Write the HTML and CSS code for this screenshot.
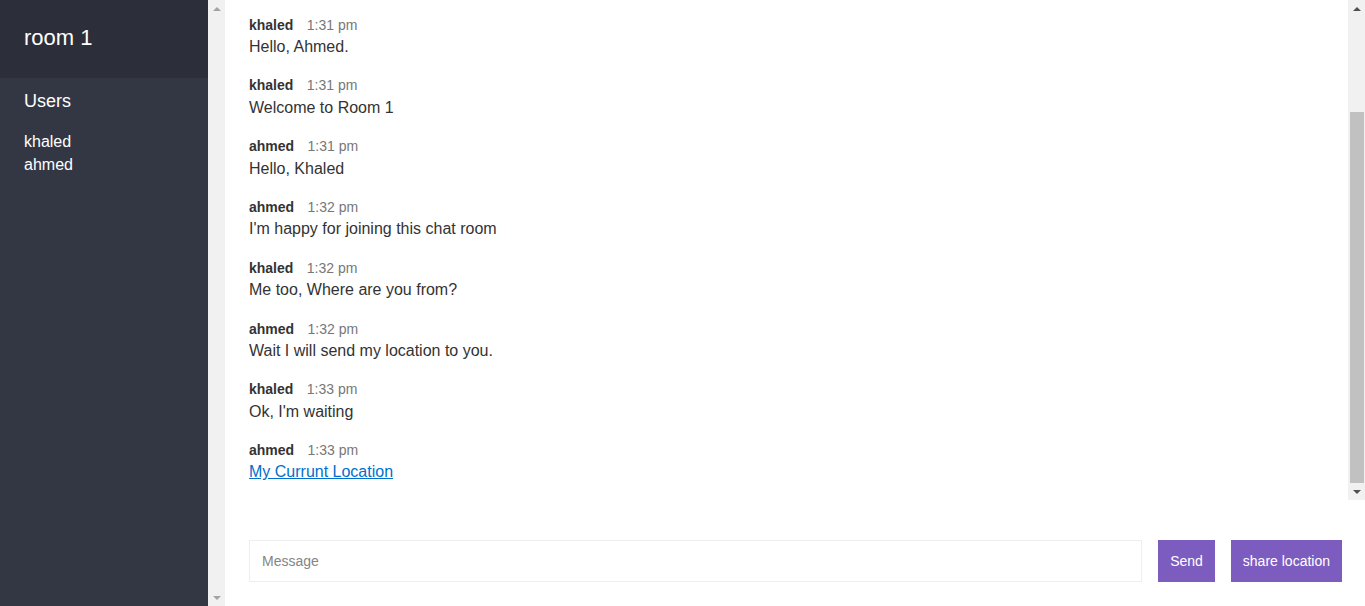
FILE: index.html
```html
<!DOCTYPE html>
<html lang="en">
<head>
<meta charset="utf-8">
<title>Chat App</title>
<link rel="stylesheet" href="styles.css">
</head>
<body>
<div class="chat">
  <div class="chat__sidebar">
    <div class="sidebar__content">
      <h2 class="room-title">room 1</h2>
      <h3 class="list-title">Users</h3>
      <ul class="users">
        <li>khaled</li>
        <li>ahmed</li>
      </ul>
    </div>
    <div class="scrollbar">
      <div class="scrollbar__btn"><span class="arrow arrow--up arrow--off"></span></div>
      <div class="scrollbar__track"></div>
      <div class="scrollbar__btn"><span class="arrow arrow--down arrow--off"></span></div>
    </div>
  </div>
  <div class="chat__main">
    <div class="chat__scroller">
      <div id="messages" class="chat__messages">
        <div class="message">
          <p><span class="message__name">khaled</span> <span class="message__meta">1:31 pm</span></p>
          <p>Hello, Ahmed.</p>
        </div>
        <div class="message">
          <p><span class="message__name">khaled</span> <span class="message__meta">1:31 pm</span></p>
          <p>Welcome to Room 1</p>
        </div>
        <div class="message">
          <p><span class="message__name">ahmed</span> <span class="message__meta">1:31 pm</span></p>
          <p>Hello, Khaled</p>
        </div>
        <div class="message">
          <p><span class="message__name">ahmed</span> <span class="message__meta">1:32 pm</span></p>
          <p>I'm happy for joining this chat room</p>
        </div>
        <div class="message">
          <p><span class="message__name">khaled</span> <span class="message__meta">1:32 pm</span></p>
          <p>Me too, Where are you from?</p>
        </div>
        <div class="message">
          <p><span class="message__name">ahmed</span> <span class="message__meta">1:32 pm</span></p>
          <p>Wait I will send my location to you.</p>
        </div>
        <div class="message">
          <p><span class="message__name">khaled</span> <span class="message__meta">1:33 pm</span></p>
          <p>Ok, I'm waiting</p>
        </div>
        <div class="message">
          <p><span class="message__name">ahmed</span> <span class="message__meta">1:33 pm</span></p>
          <p><a href="#">My Currunt Location</a></p>
        </div>
      </div>
      <div class="scrollbar">
        <div class="scrollbar__btn"><span class="arrow arrow--up"></span></div>
        <div class="scrollbar__track scrollbar__track--end"><div class="scrollbar__thumb"></div></div>
        <div class="scrollbar__btn"><span class="arrow arrow--down"></span></div>
      </div>
    </div>
    <div class="compose">
      <form id="message-form">
        <input id="message-input" name="message" placeholder="Message" required autocomplete="off" autofocus>
        <button type="button">Send</button>
      </form>
      <button type="button" id="send-location">share location</button>
    </div>
  </div>
</div>
<script src="script.js"></script>
</body>
</html>
```
FILE: styles.css
```css
* { margin: 0; padding: 0; box-sizing: border-box; }
body {
  line-height: 1.4;
  color: #333333;
  font-family: "Liberation Sans", Arial, Helvetica, sans-serif;
  font-size: 16px;
  overflow: hidden;
}
input {
  font-family: "Liberation Sans", Arial, sans-serif;
  font-size: 14px;
  border: 1px solid #eeeeee;
  padding: 8px;
  outline: none;
  color: #333;
  caret-color: #000;
}
input::placeholder { color: #858585; }
button {
  cursor: pointer;
  padding: 12px;
  background: #7C5CBF;
  border: none;
  color: white;
  font-family: "Liberation Sans", Arial, sans-serif;
  font-size: 14px;
}
.chat { display: flex; height: 100vh; }
.chat__sidebar {
  height: 100vh;
  color: white;
  background: #333744;
  width: 225px;
  flex-shrink: 0;
  display: flex;
}
.sidebar__content { flex-grow: 1; min-width: 0; }
.scrollbar {
  width: 17px;
  flex-shrink: 0;
  background: #f1f1f1;
  display: flex;
  flex-direction: column;
}
.scrollbar__btn {
  height: 17px;
  flex-shrink: 0;
  display: flex;
  align-items: center;
  justify-content: center;
}
.scrollbar__track {
  flex-grow: 1;
  display: flex;
  flex-direction: column;
}
.scrollbar__track--end { justify-content: flex-end; }
.scrollbar__thumb {
  height: 371px;
  margin: 0 1px 0 2px;
  background: #c1c1c1;
}
.arrow { width: 0; height: 0; border-left: 4px solid transparent; border-right: 4px solid transparent; }
.arrow--up { border-bottom: 4px solid #505050; }
.arrow--down { border-top: 4px solid #505050; }
.arrow--off.arrow--up { border-bottom-color: #a3a3a3; }
.arrow--off.arrow--down { border-top-color: #a3a3a3; }

.chat__main {
  flex-grow: 1;
  display: flex;
  flex-direction: column;
  height: 100vh;
  min-width: 0;
}
.chat__scroller {
  flex-grow: 1;
  min-height: 0;
  display: flex;
}
.chat__messages {
  flex-grow: 1;
  min-width: 0;
  padding: 13.6px 24px 0 24px;
  overflow: hidden;
}
.message { margin-bottom: 16px; }
.message__name { font-weight: 700; font-size: 14px; margin-right: 9px; }
.message__meta { color: #777; font-size: 14px; }
.message a { color: #0070CC; }
.compose {
  display: flex;
  flex-shrink: 0;
  margin-top: 16px;
  padding: 24px 23px 24px 24px;
}
.compose form { display: flex; flex-grow: 1; margin-right: 16px; }
.compose input {
  border: 1px solid #eeeeee;
  width: 100%;
  padding: 12px;
  margin: 0 16px 0 0;
  flex-grow: 1;
}
.room-title {
  font-weight: 400;
  font-size: 22px;
  line-height: 29px;
  background: #2c2f3a;
  padding: 23px 24px 26px;
}
.list-title {
  font-weight: 400;
  font-size: 18px;
  margin-bottom: 4px;
  padding: 11px 24px 0 24px;
}
.users {
  list-style-type: none;
  font-weight: 400;
  padding: 13px 24px 0 24px;
}
```
FILE: script.js
```js
var i = document.getElementById('message-input');
if (i) { i.focus(); }
```
